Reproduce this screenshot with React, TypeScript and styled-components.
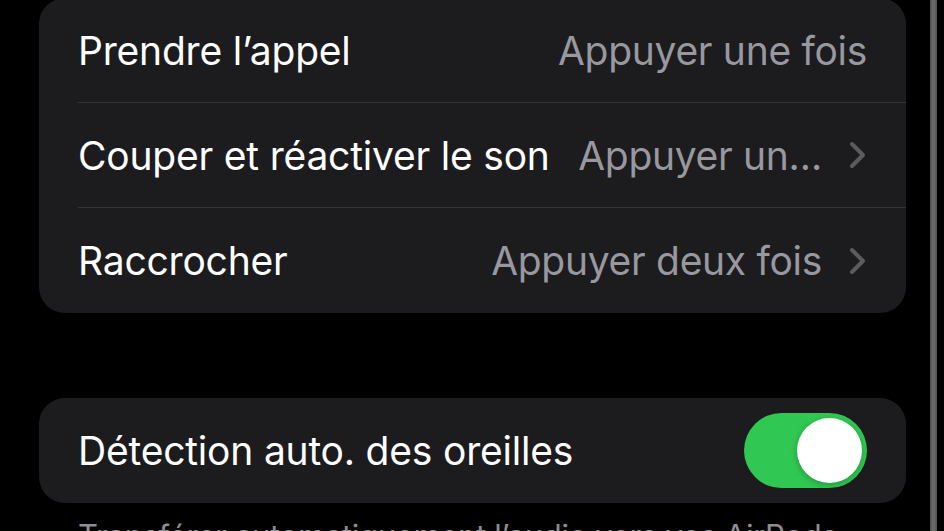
import React from "react";
import styled, { createGlobalStyle } from "styled-components";

const GlobalStyle = createGlobalStyle`
  html, body {
    margin: 0;
    padding: 0;
    background: #000;
    overflow: hidden;
  }
  body {
    font-family: "Inter", "Noto Sans", "Liberation Sans", sans-serif;
    -webkit-font-smoothing: antialiased;
  }
`;

const Screen = styled.div`
  display: flex;
  width: 944px;
  height: 531px;
  overflow: hidden;
  background: #000;
`;

const Content = styled.div`
  display: flex;
  flex-direction: column;
  width: 867px;
  margin-left: 39px;
`;

const ScrollTrack = styled.div`
  width: 7px;
  margin-left: 24px;
  height: 100%;
  background: linear-gradient(90deg, #4e4e50 0%, #6a6a6c 40%, #6a6a6c 60%, #4e4e50 100%);
`;

const Group = styled.div<{ $offset?: number }>`
  flex-shrink: 0;
  background: #1c1c1e;
  border-radius: 26px;
  margin-top: ${(p) => p.$offset ?? 0}px;
  overflow: hidden;
`;

const Row = styled.div<{ $last?: boolean }>`
  display: flex;
  align-items: center;
  height: 105px;
  margin-left: 39px;
  padding-right: 39px;
  box-sizing: border-box;
  border-bottom: ${(p) => (p.$last ? "none" : "1px solid #343437")};
`;

const Title = styled.span`
  flex: 1;
  color: #fff;
  font-size: 39px;
  letter-spacing: -0.2px;
  white-space: nowrap;
`;

const Value = styled.span`
  color: #98989e;
  font-size: 39px;
  letter-spacing: -0.3px;
  white-space: nowrap;
`;

const Chevron = styled.svg`
  width: 18px;
  height: 28px;
  margin-left: 27px;
  flex-shrink: 0;
`;

const Toggle = styled.div<{ $on: boolean }>`
  position: relative;
  width: 123px;
  height: 75px;
  border-radius: 38px;
  background: ${(p) => (p.$on ? "#30c852" : "#39393d")};
  flex-shrink: 0;
`;

const Knob = styled.div<{ $on: boolean }>`
  position: absolute;
  top: 5px;
  ${(p) => (p.$on ? "right: 5px;" : "left: 5px;")}
  width: 65px;
  height: 65px;
  border-radius: 50%;
  background: #fff;
  box-shadow: 0 2px 6px rgba(0, 0, 0, 0.25);
`;

const Footer = styled.p`
  flex-shrink: 0;
  margin: 13px 0 0 39px;
  color: #8d8d93;
  font-size: 31px;
  line-height: 40px;
  letter-spacing: -0.3px;
`;

const ChevronIcon = () => (
  <Chevron viewBox="0 0 18 28">
    <polyline
      points="3,3 14,14 3,25"
      fill="none"
      stroke="#5b5b60"
      strokeWidth="4"
      strokeLinecap="round"
      strokeLinejoin="round"
    />
  </Chevron>
);

const rows = [
  { title: "Prendre l\u2019appel", value: "Appuyer une fois", chevron: false },
  { title: "Couper et réactiver le son", value: "Appuyer un…", chevron: true },
  { title: "Raccrocher", value: "Appuyer deux fois", chevron: true },
];

function App() {
  return (
    <>
      <GlobalStyle />
      <Screen>
        <Content>
          <Group $offset={-2}>
            {rows.map((r, i) => (
              <Row key={r.title} $last={i === rows.length - 1}>
                <Title>{r.title}</Title>
                <Value>{r.value}</Value>
                {r.chevron && <ChevronIcon />}
              </Row>
            ))}
          </Group>
          <Group $offset={85}>
            <Row $last>
              <Title>Détection auto. des oreilles</Title>
              <Toggle $on>
                <Knob $on />
              </Toggle>
            </Row>
          </Group>
          <Footer>
            Transférer automatiquement l’audio vers vos AirPods lorsque vous
            les portez.
          </Footer>
        </Content>
        <ScrollTrack />
      </Screen>
    </>
  );
}

export default App;
